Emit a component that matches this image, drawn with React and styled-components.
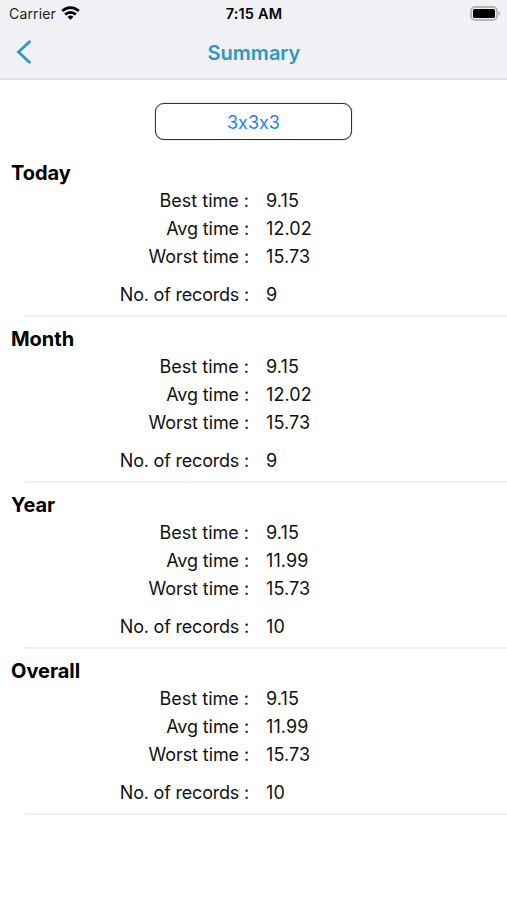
import React from "react";
import styled, { createGlobalStyle } from "styled-components";

const GlobalStyle = createGlobalStyle`
  * { box-sizing: border-box; }
  body {
    margin: 0; background: #fff; color: #000;
    font-family: Inter, "Liberation Sans", sans-serif;
  }
`;
const Screen = styled.main`
  width: 507px; height: 900px; overflow: hidden; background: #fff;
`;
const Header = styled.header`
  height: 80px; background: #f0f0f5; border-bottom: 2px solid #e4e4e6;
`;
const StatusBar = styled.div`
  height: 27px; display: grid; grid-template-columns: 1fr auto 1fr; align-items: center;
  padding: 0 6px 0 9px; font-size: 14px; line-height: 27px;
`;
const Carrier = styled.div`
  display: flex; align-items: center; gap: 5px; color: #222; letter-spacing: 0.15px;
  svg { margin-top: -2px; }
`;
const Clock = styled.div`
  font-weight: 600; font-size: 14.5px; letter-spacing: 0.2px; transform: translateX(-1px);
`;
const Battery = styled.svg`
  justify-self: end; margin-top: -1px;
`;
const NavBar = styled.nav`
  height: 51px; display: grid; grid-template-columns: 1fr auto 1fr; align-items: center; padding: 0 16px;
`;
const BackButton = styled.button`
  justify-self: start; display: flex; padding: 0; margin-top: -2px; border: 0; background: none;
`;
const Title = styled.h1`
  margin: 0 0 0 1px; font-size: 20px; line-height: 24px; font-weight: 600; color: #2c98c3;
`;
const PuzzlePicker = styled.button`
  display: block; width: 197px; height: 37px; margin: 23px 0 0 155px; padding: 2px 0 0;
  border: 1.5px solid #333; border-radius: 9px; background: #fff;
  box-shadow: 0 0 1px #555;
  font: 400 18px/34px Inter, sans-serif; color: #1d7ff8;
  font-variant-ligatures: no-contextual;
  font-feature-settings: "calt" 0;
`;
const Sections = styled.div`
  padding-top: 10px;
`;
const Section = styled.section`
  height: 166px; padding-top: 11px;
`;
const Heading = styled.h2`
  margin: 0 0 1px 11px; font-size: 20px; line-height: 24px; font-weight: 650; letter-spacing: -0.02px;
`;
const Stat = styled.div`
  display: grid; grid-template-columns: 249px 1fr; column-gap: 17px;
  height: 28px; line-height: 29px; font-size: 18px; color: #111;
  margin-top: ${(p) => (p.$spaced ? "10px" : "0")};
`;
const Label = styled.span`
  text-align: right; letter-spacing: ${(p) => p.$tracking}px;
`;
const Value = styled.span`
  letter-spacing: 0.1px;
`;
const Divider = styled.div`
  height: 2px; margin: 7px 0 0 25px; background: #f0f0f1;
`;

const sections = [
  ["Today", "9.15", "12.02", "15.73", "9"],
  ["Month", "9.15", "12.02", "15.73", "9"],
  ["Year", "9.15", "11.99", "15.73", "10"],
  ["Overall", "9.15", "11.99", "15.73", "10"],
];
const labels = [
  { text: "Best time :", tracking: 0 },
  { text: "Avg time :", tracking: -0.1 },
  { text: "Worst time :", tracking: -0.1 },
  { text: "No. of records :", tracking: -0.2 },
];

export default function App() {
  return (
    <Screen>
      <GlobalStyle />
      <Header>
        <StatusBar>
          <Carrier>
            Carrier
            <svg width="19" height="14" viewBox="0 0 19 14" fill="none" stroke="#000" strokeWidth="2.7">
              <path d="M1.2 5a11.8 11.8 0 0 1 16.6 0" />
              <path d="M4.2 8.5a7.5 7.5 0 0 1 10.6 0" />
              <path d="M9.5 13.8 6.6 11a4.1 4.1 0 0 1 5.8 0z" fill="#000" stroke="none" />
            </svg>
          </Carrier>
          <Clock>7:15 AM</Clock>
          <Battery width="31" height="15" viewBox="0 0 31 15">
            <rect x="1" y="1" width="26" height="13" rx="4" fill="none" stroke="#b5b5b8" strokeWidth="1.8" />
            <rect x="3" y="3" width="22" height="9" rx="1.5" />
            <path d="M28.5 5.5c2.2.6 2.2 3.4 0 4z" fill="#b0b0b3" />
          </Battery>
        </StatusBar>
        <NavBar>
          <BackButton aria-label="Back">
            <svg width="16" height="24" viewBox="0 0 16 24" fill="none" stroke="#2c98c3" strokeWidth="2.8" strokeLinecap="round">
              <path d="M13.5 1.8 2.5 12l11 10.2" />
            </svg>
          </BackButton>
          <Title>Summary</Title>
        </NavBar>
      </Header>
      <PuzzlePicker>3x3x3</PuzzlePicker>
      <Sections>
        {sections.map(([name, ...values]) => (
          <Section key={name}>
            <Heading>{name}</Heading>
            {labels.map(({ text, tracking }, i) => (
              <Stat key={text} $spaced={i === 3}>
                <Label $tracking={tracking}>{text}</Label>
                <Value>{values[i]}</Value>
              </Stat>
            ))}
            <Divider />
          </Section>
        ))}
      </Sections>
    </Screen>
  );
}
